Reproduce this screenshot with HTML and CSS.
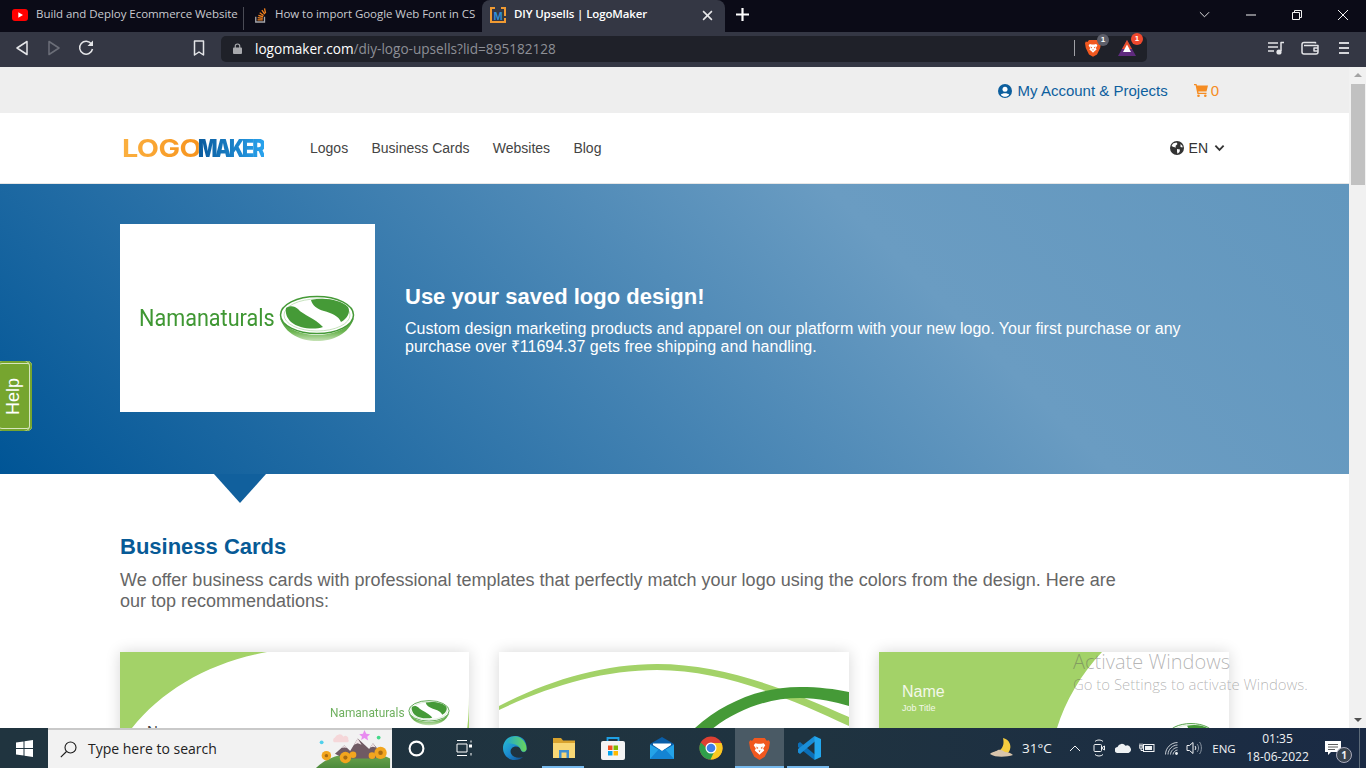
FILE: index.html
```html
<!DOCTYPE html>
<html lang="en">
<head>
<meta charset="utf-8">
<title>DIY Upsells | LogoMaker</title>
<link rel="stylesheet" href="styles.css">
</head>
<body>
<svg class="defs" width="0" height="0">
  <defs>
    <linearGradient id="bowlGrad" x1="0" y1="0" x2="0" y2="1"><stop offset="0" stop-color="#459a37"/><stop offset=".6" stop-color="#6db552"/><stop offset="1" stop-color="#c5e2b5"/></linearGradient>
    <linearGradient id="edgeGrad" x1="0" y1="0" x2="1" y2="1"><stop offset="0" stop-color="#2bc3d2"/><stop offset=".5" stop-color="#1b8ad0"/><stop offset="1" stop-color="#11407f"/></linearGradient>
    <linearGradient id="edgeTop" x1="0" y1="0" x2="1" y2="0"><stop offset="0" stop-color="#1fa8cf"/><stop offset="1" stop-color="#6ad65a"/></linearGradient>
    <linearGradient id="hillGrad" x1="0" y1="0" x2="0" y2="1"><stop offset="0" stop-color="#6fa84f"/><stop offset="1" stop-color="#4d8a3c"/></linearGradient>
    <symbol id="bowl" viewBox="0 0 76 48">
      <path class="bowl-base" d="M1 24C6 40 22 47 38 47S70 40 75 24C68 36 52 41 38 41S8 36 1 24Z"/>
      <ellipse class="bowl-ring" cx="38" cy="21" rx="36.5" ry="18.5"/>
      <ellipse class="bowl-white" cx="38" cy="21" rx="33" ry="16"/>
      <path class="bowl-leaf" d="M32 6C46 3 62 6 69 13C72 18 68 25 62 28C60 22 52 19 45 17C38 15 33 11 32 6Z"/>
      <path class="bowl-leaf" d="M7 14C11 11 16 12 19 15C24 21 36 24 44 33C36 36 20 35 12 28C8 24 6 19 7 14Z"/>
    </symbol>
    <symbol id="brave" viewBox="0 0 20 22">
      <path class="brave-orange" d="M5 1H15L17 3.500L19 3L20 5L19 11L15 19L10 22L5 19L1 11L0 5L1 3L3 3.500Z"/>
      <path class="brave-white" d="M6 6L8.500 6.500H11.500L14 6L15.500 8L13.500 11L14.500 13L11.500 15.500L10 17L8.500 15.500L5.500 13L6.500 11L4.500 8Z"/>
      <path class="brave-orange" d="M7 9L9 10.500L7.500 11.500ZM13 9L11 10.500L12.500 11.500ZM9 13H11L10 14.500Z"/>
    </symbol>
  </defs>
</svg>

<div class="tabs">
  <div class="tab tab-one">
    <svg class="fav" viewBox="0 0 16 12"><rect class="yt-red" width="16" height="12" rx="3"/><path class="fill-white" d="M6.300 3.300L11 6L6.300 8.700Z"/></svg>
    <span class="tab-title">Build and Deploy Ecommerce Website</span>
  </div>
  <div class="tab tab-two">
    <svg class="fav" viewBox="0 0 16 18"><path class="so-tray" d="M2 11V17H12V11"/><path class="so-bar" d="M4 14.500H10M4.200 12L10 12.800M5 9.300L10.400 11M6.500 6.500L11 9.500M9 3.500L12.300 8M12 1.500L13.200 7"/></svg>
    <span class="tab-title">How to import Google Web Font in CS</span>
  </div>
  <div class="tab tab-active">
    <svg class="fav" viewBox="0 0 16 16"><path class="lm-bracket" d="M5 1H1V15H15V11"/><path class="lm-bracket-2" d="M11 1H15V9"/><text class="lm-letter" x="8" y="12.500" text-anchor="middle">M</text></svg>
    <span class="tab-title tab-title-active">DIY Upsells | LogoMaker</span>
    <svg class="tab-close" viewBox="0 0 10 10"><path class="stroke-white" d="M1 1L9 9M9 1L1 9"/></svg>
  </div>
  <svg class="new-tab" viewBox="0 0 12 12"><path class="stroke-plus" d="M6 0V12M0 6H12"/></svg>
  <div class="win-controls">
    <svg class="win-chev" viewBox="0 0 12 7"><path class="stroke-thin" d="M1 1L6 6L11 1"/></svg>
    <svg class="win-icon" viewBox="0 0 10 10"><path class="stroke-thin" d="M0 5H10"/></svg>
    <svg class="win-icon" viewBox="0 0 10 10"><path class="stroke-thin" d="M2.500 2V.5H9.500V7.500H8M.5 2.500H7.500V9.500H.5Z"/></svg>
    <svg class="win-icon" viewBox="0 0 10 10"><path class="stroke-thin" d="M0 0L10 10M10 0L0 10"/></svg>
  </div>
</div>

<div class="toolbar">
  <svg class="tool tool-first" viewBox="0 0 32 18"><path class="tool-line" d="M21 2.500L11 9L21 15.500Z"/></svg>
  <svg class="tool" viewBox="0 0 32 18"><path class="tool-line tool-dim" d="M11 2.500L21 9L11 15.500Z"/></svg>
  <svg class="tool" viewBox="0 0 32 18"><path class="tool-line" d="M21.500 5A6.500 6.500 0 1 0 22.500 10"/><path class="fill-light" d="M23 1.500V7H17.500Z"/></svg>
  <svg class="tool tool-mark" viewBox="0 0 32 18"><path class="tool-line" d="M11.500 2H20.500V16L16 13L11.500 16Z"/></svg>
  <div class="omnibox">
    <svg class="lock" viewBox="0 0 10 12"><path class="lock-shackle" d="M2.500 6V3.500a2.500 2.500 0 0 1 5 0V6"/><rect class="lock-body" y="5" width="10" height="7" rx="1"/></svg>
    <div class="url"><span class="url-host">logomaker.com</span>/diy-logo-upsells?lid=895182128</div>
    <span class="omni-divider"></span>
    <div class="shield-wrap">
      <svg class="shield"><use href="#brave"/></svg>
      <span class="badge badge-grey">1</span>
    </div>
    <div class="bat-wrap">
      <svg class="bat" viewBox="0 0 18 16"><path class="bat-purple" d="M9 0L18 16H0Z"/><path class="bat-orange" d="M9 0L14 9H4Z"/><path class="fill-white" d="M9 4.500L13 12H5Z"/></svg>
      <span class="badge badge-red">1</span>
    </div>
  </div>
  <svg class="tool-right tool-right-first" viewBox="0 0 18 14"><path class="tool-line" d="M1 2H11M1 6H11M1 10H7"/><path class="tool-line" d="M14 10V1.500H17"/><circle class="fill-light" cx="12" cy="11" r="2.600"/></svg>
  <svg class="tool-right" viewBox="0 0 18 14"><path class="tool-line" d="M14.500 2.500V1.500H3C2 1.500 1 2.300 1 3.500V11C1 12.200 2 13 3 13H15C16 13 17 12.200 17 11V4.500H3"/><path class="tool-line" d="M17 7H13V10H17"/></svg>
  <svg class="tool-right" viewBox="0 0 18 14"><path class="tool-thick" d="M4 2H14M4 7H14M4 12H14"/></svg>
</div>

<div class="viewport">
  <main class="page">
    <div class="account-bar">
      <a class="account-link">
        <svg class="account-icon" viewBox="0 0 14 14"><circle class="fill-blue" cx="7" cy="7" r="7"/><circle class="fill-white" cx="7" cy="5.300" r="2.500"/><path class="fill-white" d="M2.800 10.800C4 8.800 10 8.800 11.200 10.800C10 12.200 8.500 12.800 7 12.800S4 12.200 2.800 10.800Z"/></svg>
        My Account &amp; Projects
      </a>
      <a class="cart-link">
        <svg class="cart-icon" viewBox="0 0 14 13"><path class="cart-fill" d="M0 0H2.500L3 1.500H14L12.500 7.500H4.300L4.600 8.700H12.500V10H3.400L1.600 1.300H0Z"/><circle class="cart-fill" cx="4.500" cy="11.700" r="1.300"/><circle class="cart-fill" cx="11.300" cy="11.700" r="1.300"/></svg>
        0
      </a>
    </div>
    <nav class="site-nav">
      <div class="brand"><span class="brand-logo">LOGO</span><span class="brand-maker">MAKER</span></div>
      <ul class="nav-links">
        <li>Logos</li>
        <li>Business Cards</li>
        <li>Websites</li>
        <li>Blog</li>
      </ul>
      <div class="lang">
        <svg class="globe" viewBox="0 0 14 14"><circle class="fill-dark" cx="7" cy="7" r="7"/><path class="fill-white" d="M3 2.500L6.500 1.500L7.500 3L5.500 5L6 6.500L3.500 6L1.500 5ZM7 8L10 8.500L9.500 11L7.500 12.800L7 10.500ZM10.500 3L12.500 5V6.500L10.500 6Z"/></svg>
        <span>EN</span>
        <svg class="lang-chev" viewBox="0 0 12 8"><path class="stroke-dark" d="M1.500 1.500L6 6L10.500 1.500"/></svg>
      </div>
    </nav>
    <section class="hero">
      <div class="hero-logo">
        <span class="nama-text">Namanaturals</span>
        <svg class="nama-bowl"><use href="#bowl"/></svg>
      </div>
      <div class="hero-copy">
        <h1>Use your saved logo design!</h1>
        <p>Custom design marketing products and apparel on our platform with your new logo. Your first purchase or any purchase over ₹11694.37 gets free shipping and handling.</p>
      </div>
      <span class="hero-pointer"></span>
    </section>
    <section class="cards-section">
      <h2>Business Cards</h2>
      <p class="lede">We offer business cards with professional templates that perfectly match your logo using the colors from the design. Here are our top recommendations:</p>
      <div class="card-grid">
        <div class="card">
          <svg class="card-art" viewBox="0 0 349 200">
            <path class="card-green" d="M0 0H147C90 10 42 38 12 76C6 85 0 100 0 112Z"/>
            <path class="card-green" d="M349 44V90L345 90C348 75 349 60 349 44Z"/>
            <text class="card-name-dark" x="27" y="84">Name</text>
          </svg>
          <div class="card-logo">
            <span class="card-logo-text">Namanaturals</span>
            <svg class="card-logo-bowl"><use href="#bowl"/></svg>
          </div>
        </div>
        <div class="card">
          <svg class="card-art" viewBox="0 0 350 200">
            <path class="card-green" d="M0 54C50 28 105 12 158 12C225 12 290 38 350 65V74C290 46 225 18 158 18C105 18 50 34 0 58Z"/>
            <path class="card-dark" d="M196 76C225 50 262 35 301 35C320 35 336 37 350 40V54C336 50 320 46 301 46C268 46 235 58 207 82Z"/>
          </svg>
        </div>
        <div class="card">
          <svg class="card-art" viewBox="0 0 350 200">
            <path class="card-green" d="M0 0H223C202 22 186 50 178 76C174 90 172 110 172 200H0Z"/>
            <text class="card-name" x="23" y="45">Name</text>
            <text class="card-job" x="23" y="59">Job Title</text>
          </svg>
          <svg class="card-bowl-large"><use href="#bowl"/></svg>
        </div>
      </div>
    </section>
  </main>
  <div class="scrollbar">
    <span class="arrow-up"></span>
    <span class="thumb"></span>
    <span class="arrow-down"></span>
  </div>
  <button class="help-tab"><span>Help</span></button>
  <div class="activate">
    <div class="activate-title">Activate Windows</div>
    <div class="activate-sub">Go to Settings to activate Windows.</div>
  </div>
</div>

<footer class="taskbar">
  <div class="start">
    <svg class="win-logo" viewBox="0 0 17 17"><path class="fill-white" d="M0 2.500L7.500 1.400V8H0ZM8.500 1.300L17 0V8H8.500ZM0 9H7.500V15.600L0 14.500ZM8.500 9H17V17L8.500 15.700Z"/></svg>
  </div>
  <div class="searchbox">
    <svg class="search-icon" viewBox="0 0 17 17"><circle class="stroke-black" cx="10.500" cy="6.500" r="5.500"/><path class="stroke-black" d="M6.500 10.500L.8 16.200"/></svg>
    <span class="search-text">Type here to search</span>
    <svg class="search-art" viewBox="0 0 78 40">
      <path class="art-hill" d="M0 40C12 28 30 24 46 24C58 24 70 26 78 30V40Z"/>
      <path class="art-m1" d="M20 25L30 16L36 22L44 9L56 20L60 14L70 26L62 30H30Z"/>
      <path class="art-snow" d="M44 9L40 15.500L44 14L48 15.500ZM60 14L57 18.500L60 17.500L63 18.500ZM30 16L27 19L30 18.500L33 19Z"/>
      <path class="art-cloud" d="M19 13A3 3 0 0 1 20 8A5 5 0 0 1 29 7A3 3 0 0 1 34 10A2 2 0 0 1 33 13Z"/>
      <path class="art-star" d="M51 0L53 4L57 4.500L54 7L55 11L51 8.500L47.500 10.500L48.500 7L45.500 4.500L49.500 4Z"/>
      <circle class="art-mint" cx="66" cy="8" r="2"/>
      <circle class="art-sky" cx="6" cy="13" r="2"/>
      <circle class="art-flower" cx="11" cy="27" r="5"/><circle class="art-center" cx="11" cy="27" r="1.800"/>
      <circle class="art-flower" cx="31" cy="29" r="6"/><circle class="art-center" cx="31" cy="29" r="2.200"/>
      <circle class="art-flower" cx="39" cy="26" r="3.500"/>
      <circle class="art-flower" cx="59" cy="27" r="3.500"/>
      <circle class="art-flower" cx="68" cy="24" r="6.500"/><circle class="art-center" cx="68" cy="24" r="2.400"/>
    </svg>
  </div>
  <div class="slot"><svg class="cortana" viewBox="0 0 16 16"><circle class="stroke-cortana" cx="8" cy="8" r="6.500"/></svg></div>
  <div class="slot slot-task"><svg class="taskview" viewBox="0 0 16 16"><path class="stroke-task" d="M1 .5H11M1 15.500H11M1 4H11V12H1ZM15 .5V2.500M15 13V15.500"/><rect class="fill-white" x="13" y="4.500" width="3" height="3"/></svg></div>
  <div class="slot"><svg class="app-icon" viewBox="0 0 24 24"><path class="edge-main" d="M12 0C5 0 0 5.500 0 12C0 19 5.500 24 11.500 24C15.500 24 18 22.800 20 21C16.500 22.500 10 22 8 17.500C6.500 14 9 10.500 13 10.500C15.500 10.500 17.500 12 18 14C19 17 22 16.500 23.300 14.500C24.500 11 23.500 0 12 0Z"/><path class="edge-top" d="M3 6C6 .5 13 -1 18 2.500C22 5 24 10 23.500 13.500C22.500 16.500 19 16.500 18 14C17 10.500 14 8.500 10.500 8C7.500 7.500 5 7 3 6Z"/></svg></div>
  <div class="slot slot-open"><svg class="app-icon" viewBox="0 0 24 22"><path class="folder-back" d="M1 1H9L11 3.500H23V21H1Z"/><path class="folder-front" d="M1 6H23V21H1Z"/><path class="folder-blue" d="M7 13H17V21H14.500V15.500H9.500V21H7Z"/></svg></div>
  <div class="slot"><svg class="app-icon" viewBox="0 0 24 24"><path class="store-handle" d="M6.500 7V2H17.500V7"/><rect class="store-bag" x="0" y="5" width="24" height="19" rx="2"/><rect class="store-r" x="7" y="9.500" width="4.500" height="4.500"/><rect class="store-g" x="12.500" y="9.500" width="4.500" height="4.500"/><rect class="store-b" x="7" y="15" width="4.500" height="4.500"/><rect class="store-y" x="12.500" y="15" width="4.500" height="4.500"/></svg></div>
  <div class="slot"><svg class="app-icon" viewBox="0 0 24 22"><path class="mail-dark" d="M0 7L12 0L24 7V22H0Z"/><path class="fill-white" d="M3 6.500H21V8L12 14L3 8Z"/><path class="mail-light" d="M0 7.500L12 14.500L24 7.500V22H0Z"/><path class="mail-mid" d="M0 22L9 12L12 14.500L15 12L24 22Z"/></svg></div>
  <div class="slot"><svg class="app-icon" viewBox="0 0 24 24"><circle class="chrome-red" cx="12" cy="12" r="11.500"/><path class="chrome-green" d="M1.800 6.500A11.500 11.500 0 0 0 13.500 23.400L17 12H7.500Z"/><path class="chrome-yellow" d="M12 7H22.500A11.500 11.500 0 0 1 11.500 23.500L16.500 13Z"/><circle class="fill-white" cx="12" cy="12" r="5.500"/><circle class="chrome-blue" cx="12" cy="12" r="4.300"/></svg></div>
  <div class="slot slot-active"><svg class="app-brave"><use href="#brave"/></svg></div>
  <div class="slot slot-code"><svg class="app-icon" viewBox="0 0 24 24"><path class="code-left" d="M1 7.500L3 6L19 19.500L17.500 24L1 11Z"/><path class="code-mid" d="M1 16.500L3 18L19 4.500L17.500 0L1 13Z"/><path class="code-right" d="M17.500 0L24 3V21L17.500 24Z"/></svg></div>
  <div class="tray">
    <div class="tray-weather"><svg class="moon" viewBox="0 0 23 20"><path class="moon-fill" d="M13 0A9 9 0 1 1 4 14C11 14 15 8 13 0Z"/><path class="moon-cloud" d="M0 16C3 13 6 14 8 12C11 11 13 13 15 14C18 14 21 15 23 17C17 19 6 20 0 16Z"/></svg></div>
    <div class="tray-temp">31°C</div>
    <div class="tray-item tray-chevron"><svg class="tray-svg-chev" viewBox="0 0 12 7"><path class="stroke-tray" d="M1 6L6 1L11 6"/></svg></div>
    <div class="tray-item"><svg class="tray-svg" viewBox="0 0 12 18"><path class="stroke-tray" d="M2 2.500C4 .5 8 .5 10 2.500M2 15.500C4 17.500 8 17.500 10 15.500"/><rect class="stroke-tray" x="1" y="5.500" width="7.500" height="7" rx="1"/><path class="stroke-tray" d="M8.500 9L11.500 7V11L8.500 9Z"/></svg></div>
    <div class="tray-item"><svg class="tray-svg-wide" viewBox="0 0 16 10"><path class="fill-cloud" d="M3 10A3 3 0 0 1 2.500 4A4.500 4.500 0 0 1 10.500 2.800A3.500 3.500 0 0 1 13.500 10Z"/></svg></div>
    <div class="tray-item"><svg class="tray-svg-wide" viewBox="0 0 16 10"><path class="stroke-tray" d="M3 .5V3M1 .5V3M0 3H4V5H0ZM2 5V7.500H4"/><rect class="stroke-tray" x="4.500" y="1.500" width="10.500" height="7"/><rect class="fill-cloud" x="6" y="3" width="7" height="4"/></svg></div>
    <div class="tray-item"><svg class="tray-svg-wifi" viewBox="0 0 13 13"><path class="stroke-wifi" d="M.5 12.500C.5 6 6 .5 12.500 .5M3 12.500C3 7.500 7.500 3 12.500 3M5.500 12.500C5.500 9 9 5.500 12.500 5.500M8 12.500C8 10.500 10.500 8 12.500 8"/><circle class="fill-cloud" cx="11.500" cy="11.500" r="1.400"/></svg></div>
    <div class="tray-item tray-vol"><svg class="tray-svg-vol" viewBox="0 0 16 14"><path class="stroke-tray" d="M1 4.500H3.500L7 1.500V12.500L3.500 9.500H1Z"/><path class="stroke-tray" d="M9 5C10 6 10 8 9 9"/><path class="stroke-dim" d="M11 3C13 5 13 9 11 11M13.500 1C16 4 16 10 13.500 13"/></svg></div>
    <div class="tray-lang">ENG</div>
    <div class="tray-clock"><span>01:35</span><span>18-06-2022</span></div>
    <div class="tray-notify">
      <svg class="notify-svg" viewBox="0 0 16 14"><path class="fill-white" d="M0 0H16V11H6L3 14V11H0Z"/><path class="notify-lines" d="M3 3.500H13M3 6H13M3 8.500H10"/></svg>
      <span class="notify-badge">1</span>
    </div>
    <span class="tray-sliver"></span>
  </div>
</footer>
</body>
</html>
```

FILE: styles.css
```css
* { box-sizing: border-box; }
html, body { margin: 0; padding: 0; }
body {
  width: 1366px;
  height: 768px;
  overflow: hidden;
  display: flex;
  flex-direction: column;
  background: #fff;
  font-family: "Liberation Sans", Arial, sans-serif;
}
.defs { position: absolute; }

/* shared svg paint */
.fill-white { fill: #fff; }
.fill-light { fill: #e4e5e8; }
.fill-blue { fill: #0d5f9e; }
.fill-dark { fill: #333; }
.fill-cloud { fill: #eef1f3; }
.stroke-white { stroke: #e8e8ea; stroke-width: 1.400; fill: none; }
.stroke-thin { stroke: #f2f2f2; stroke-width: 1; fill: none; }
.stroke-plus { stroke: #fff; stroke-width: 2; fill: none; }
.stroke-dark { stroke: #333; stroke-width: 2; fill: none; }
.stroke-black { stroke: #1a1a1a; stroke-width: 1.100; fill: none; }
.stroke-cortana { stroke: #fff; stroke-width: 2; fill: none; }
.stroke-task { stroke: #fff; stroke-width: 1; fill: none; }
.stroke-tray { stroke: #f0f2f4; stroke-width: 1; fill: none; }
.stroke-dim { stroke: #8b96a3; stroke-width: 1; fill: none; }
.stroke-wifi { stroke: #c5cbd2; stroke-width: 1; fill: none; }

/* tab strip */
.tabs {
  flex: 0 0 32px;
  min-height: 0;
  height: 32px;
  display: flex;
  align-items: stretch;
  background: #0b0b17;
  font-family: "Open Sans", "Noto Sans", sans-serif;
  font-size: 11.500px;
  line-height: 14px;
  color: #c9cad0;
}
.tab { display: flex; align-items: center; white-space: nowrap; }
.tab-one { width: 244px; padding: 0 2px 9px 12px; border-right: 1px solid #4a4b55; margin: 7px 0 2px; }
.tab-two { width: 238px; padding: 0 2px 9px 10px; margin: 7px 0 2px; }
.tab-active { width: 243px; padding: 0 12px 4px 8px; background: #343744; border-radius: 8px 8px 0 0; }
.fav { width: 16px; height: 16px; flex: none; margin: 2px 8px 0 0; }
.tab-two .fav { margin-right: 7px; width: 14px; }
.tab-title { flex: 1; letter-spacing: -.05px; }
.tab-title-active { color: #fff; font-weight: 600; letter-spacing: -.13px; }
.tab-close { width: 11px; height: 11px; flex: none; margin-top: 2px; }
.new-tab { width: 13px; height: 13px; align-self: center; margin: 0 0 3px 11px; flex: none; }
.yt-red { fill: #f00; }
.so-tray { stroke: #a6a7ab; stroke-width: 1.500; fill: none; }
.so-bar { stroke: #f2811d; stroke-width: 1.500; fill: none; }
.lm-bracket { stroke: #f09a32; stroke-width: 2; fill: none; }
.lm-bracket-2 { stroke: #f09a32; stroke-width: 2; fill: none; }
.lm-letter { fill: #2f8fd8; font: 700 11px "Liberation Sans", sans-serif; }
.win-controls { margin-left: auto; padding-bottom: 3px; display: flex; align-items: center; }
.win-chev { width: 11px; height: 7px; margin-right: 36px; }
.win-icon { width: 10px; height: 10px; margin-right: 36px; }
.win-icon:last-child { margin-right: 18px; }

/* toolbar */
.toolbar {
  flex: 0 0 35px;
  display: flex;
  align-items: center;
  padding: 0 0 3px 6px;
  background: #343744;
}
.tool { width: 32px; height: 18px; flex: none; }
.tool-mark { margin-left: 81px; }
.tool-line { stroke: #e4e5e8; stroke-width: 1.500; fill: none; stroke-linejoin: round; }
.tool-dim { stroke: #6b6e78; }
.tool-thick { stroke: #d5d6da; stroke-width: 2; fill: none; }
.omnibox {
  flex: none;
  width: 926px;
  height: 26px;
  margin: 2px 0 0 6px;
  display: flex;
  align-items: center;
  padding-left: 12px;
  border-radius: 5px;
  background: #1f2129;
  font-family: "Open Sans", "Noto Sans", sans-serif;
}
.lock { width: 9px; height: 11px; flex: none; margin-bottom: 2px; }
.lock-shackle { stroke: #a8a9ad; stroke-width: 1.300; fill: none; }
.lock-body { fill: #a8a9ad; }
.url { margin-left: 13px; padding-bottom: 2px; font-size: 13.600px; color: #8d8f96; flex: 1; white-space: nowrap; }
.url-host { color: #fff; }
.omni-divider { width: 1px; height: 16px; background: #a0a1a6; flex: none; margin-bottom: 2px; }
.shield-wrap, .bat-wrap { position: relative; flex: none; margin-bottom: 2px; }
.shield-wrap { width: 16px; height: 18px; margin-left: 10px; }
.shield { display: block; width: 16px; height: 18px; }
.bat-wrap { width: 18px; height: 16px; margin-left: 17px; margin-right: 11px; }
.bat { display: block; width: 18px; height: 16px; }
.bat-purple { fill: #5f2a7e; }
.bat-orange { fill: #e9512b; }
.badge {
  position: absolute;
  top: -5px;
  left: 12px;
  width: 12px;
  height: 12px;
  border-radius: 50%;
  font: 700 8px/12px "Liberation Sans", sans-serif;
  text-align: center;
  color: #fff;
}
.badge-grey { background: #5d5f6a; }
.badge-red { background: #f0492e; left: 13px; top: -7px; }
.tool-right { width: 18px; height: 14px; flex: none; margin-right: 16px; }
.tool-right-first { margin-left: 120px; }
.brave-orange { fill: #f1581f; }
.brave-white { fill: #fff; }

/* viewport */
.viewport { flex: 1; min-height: 0; display: flex; position: relative; overflow: hidden; }
.page { width: 1349px; flex: none; background: #fff; overflow: hidden; }
.scrollbar {
  width: 17px;
  flex: none;
  background: #f1f1f1;
  display: flex;
  flex-direction: column;
  align-items: center;
}
.arrow-up { margin-top: 6px; width: 0; height: 0; border: 4px solid transparent; border-top: 0; border-bottom: 4px solid #a3a3a3; }
.thumb { width: 14px; height: 101px; margin-top: 7px; background: #c1c1c1; }
.arrow-down { margin-top: auto; margin-bottom: 6px; width: 0; height: 0; border: 4px solid transparent; border-bottom: 0; border-top: 4px solid #505050; }

.account-bar {
  height: 46px;
  display: flex;
  align-items: center;
  justify-content: flex-end;
  padding: 1px 130px 0 0;
  background: #eee;
  font-size: 15px;
}
.account-link { display: flex; align-items: center; gap: 6px; color: #0d5f9e; }
.account-icon { width: 14px; height: 14px; }
.cart-link { display: flex; align-items: center; gap: 3px; margin-left: 26px; color: #f58c22; }
.cart-icon { width: 14px; height: 13px; }
.cart-fill { fill: #f58c22; }

.site-nav {
  height: 71px;
  display: flex;
  align-items: center;
  padding: 0 124px 0 122px;
  border-bottom: 1px solid #e6e6e6;
  background: #fff;
}
.brand {
  width: 142px;
  flex: none;
  display: flex;
  padding-top: 1px;
  font: 800 24px/1 Inter, sans-serif;
  white-space: nowrap;
}
.brand-logo {
  display: block;
  width: 64px;
  font-weight: 700;
  letter-spacing: -.5px;
  background: linear-gradient(90deg, #fbb040, #f7941d);
  -webkit-background-clip: text;
  background-clip: text;
  color: transparent;
  transform: scaleX(1.2);
  transform-origin: left center;
  margin-right: 12px;
}
.brand-maker {
  display: block;
  width: 78px;
  font-weight: 900;
  letter-spacing: -2.800px;
  background: linear-gradient(90deg, #0a5a9c, #29a3ee);
  -webkit-background-clip: text;
  background-clip: text;
  color: transparent;
  transform: scaleX(.85);
  transform-origin: left center;
  margin-right: -12px;
}
.nav-links {
  list-style: none;
  margin: 0 0 0 46px;
  padding: 0;
  display: flex;
  gap: 23.300px;
  font-size: 14px;
  color: #444;
}
.lang { margin-left: auto; display: flex; align-items: center; font-size: 14px; color: #333; }
.globe { width: 14px; height: 14px; margin-right: 5px; }
.lang-chev { width: 11px; height: 8px; margin-left: 6px; }

.hero {
  position: relative;
  height: 290px;
  display: flex;
  align-items: flex-start;
  gap: 30px;
  padding: 40px 0 0 120px;
  background: linear-gradient(45deg, #005596 0%, #6a9cc2 68%, #6297be 100%);
}
.hero-logo {
  width: 255px;
  height: 188px;
  flex: none;
  display: flex;
  align-items: center;
  justify-content: center;
  background: #fff;
}
.nama-text {
  width: 134px;
  margin: 2px 0 0 -1px;
  font: 400 23.500px/1 Roboto, sans-serif;
  color: #3f9733;
  transform: scaleX(.92);
  transform-origin: left center;
  white-space: nowrap;
}
.nama-bowl { width: 76px; height: 48px; margin-left: 6px; flex: none; }
.bowl-base { fill: url(#bowlGrad); }
.bowl-ring { fill: #fff; stroke: #459a37; stroke-width: 1.500; }
.bowl-white { fill: #fff; stroke: #8cc47c; stroke-width: .5; }
.bowl-leaf { fill: #459a37; }
.hero-copy { width: 800px; height: 188px; padding-top: 4px; display: flex; flex-direction: column; justify-content: center; color: #fff; }
.hero-copy h1 { margin: 0 0 11px; font-size: 22px; line-height: 25px; font-weight: 700; }
.hero-copy p { margin: 0; font-size: 16px; line-height: 18px; }
.hero-pointer {
  position: absolute;
  left: 214px;
  top: 290px;
  width: 0;
  height: 0;
  border-left: 26px solid transparent;
  border-right: 26px solid transparent;
  border-top: 29px solid #11609d;
}

.cards-section { padding: 60px 120px 0; }
.cards-section h2 { margin: 0 0 11px; font-size: 22px; line-height: 25px; color: #075a96; font-weight: 700; }
.lede { margin: 0; width: 1010px; font-size: 18px; line-height: 21px; color: #666; }
.card-grid { margin-top: 40px; display: grid; grid-template-columns: 349px 350px 350px; gap: 30px; }
.card { position: relative; height: 200px; background: #fff; box-shadow: 0 0 14px rgba(0,0,0,.16); }
.card-art { display: block; width: 100%; height: 100%; }
.card-green { fill: #a3d268; }
.card-dark { fill: #459a37; }
.card-name-dark { font: 15px "Liberation Sans", sans-serif; fill: #444; }
.card-name { font: 16px "Liberation Sans", sans-serif; fill: #f3f8ea; }
.card-job { font: 9px "Liberation Sans", sans-serif; fill: #f3f8ea; }
.card-logo { position: absolute; left: 210px; top: 47px; display: flex; align-items: center; }
.card-logo-text { font: 400 13.500px/1 Roboto, sans-serif; color: #6fb05f; transform: scaleX(.88); transform-origin: left center; width: 78px; white-space: nowrap; }
.card-logo-bowl { width: 42px; height: 27px; }
.card-bowl-large { position: absolute; left: 288px; top: 70px; width: 48px; height: 30px; }

/* overlays */
.help-tab {
  position: absolute;
  left: -3px;
  top: 294px;
  width: 35px;
  height: 70px;
  padding: 0 2px 0 0;
  border: 0;
  border-radius: 5px;
  background: #76a52f;
  box-shadow: inset -2px 0 0 #76a52f, inset -3px 0 0 #d7e6bd, inset 0 2px 0 #76a52f, inset 0 3px 0 #d7e6bd, inset 0 -2px 0 #76a52f, inset 0 -3px 0 #d7e6bd;
  font: 400 18px "Liberation Sans", sans-serif;
  color: #fff;
  display: flex;
  align-items: center;
  justify-content: center;
}
.help-tab span { display: block; transform: rotate(-90deg); }
.activate {
  position: absolute;
  left: 1073px;
  top: 583px;
  font-family: "Open Sans", "Noto Sans", sans-serif;
  font-weight: 300;
  color: rgba(90,90,90,.45);
  white-space: nowrap;
  pointer-events: none;
}
.activate-title { font-size: 20px; line-height: 24px; }
.activate-sub { font-size: 14.900px; line-height: 21px; }

/* taskbar */
.taskbar {
  flex: 0 0 40px;
  position: relative;
  display: flex;
  align-items: stretch;
  background: linear-gradient(90deg, #20343f, #1f3340 60%, #1a2a44);
  color: #fff;
}
.start { width: 48px; display: flex; align-items: center; justify-content: center; }
.win-logo { width: 17px; height: 17px; }
.searchbox {
  width: 344px;
  display: flex;
  align-items: center;
  position: relative;
  padding-left: 12px;
  background: #f2f2f2;
  border-top: 2px solid #c9c9c9;
  overflow: hidden;
}
.search-icon { width: 17px; height: 17px; flex: none; }
.search-text { margin-left: 11px; padding-bottom: 2px; font: 14px "Open Sans", "Noto Sans", sans-serif; color: #222; }
.search-art { position: absolute; right: 0; bottom: 0; width: 78px; height: 38px; }
.art-hill { fill: url(#hillGrad); }
.art-m1 { fill: #6f5a63; }
.art-snow { fill: #efe3e6; }
.art-cloud { fill: #f5d7d9; }
.art-star { fill: #e88cf0; }
.art-mint { fill: #44d98a; }
.art-sky { fill: #4fd0ec; }
.art-flower { fill: #f2a51e; }
.art-center { fill: #a76a12; }

.slot { width: 49px; flex: none; display: flex; align-items: center; justify-content: center; position: relative; }
.slot-task { padding-right: 4px; }
.slot-open::after, .slot-active::after, .slot-code::after {
  content: "";
  position: absolute;
  bottom: 0;
  left: 3px;
  right: 4px;
  height: 2px;
  background: #76b9ed;
}
.slot-active { background: #4a5a65; }
.slot-active::after { left: 0; right: 0; }
.cortana { width: 17px; height: 17px; }
.taskview { width: 16px; height: 16px; }
.app-icon { width: 24px; height: 24px; }
.app-brave { width: 21px; height: 23px; }
.edge-main { fill: url(#edgeGrad); }
.edge-top { fill: url(#edgeTop); }
.folder-back { fill: #d9a32e; }
.folder-front { fill: #f8d775; }
.folder-blue { fill: #3f8fd0; }
.store-handle { stroke: #1fa0e4; stroke-width: 1.800; fill: none; }
.store-bag { fill: #f4f4f4; }
.store-r { fill: #f25022; }
.store-g { fill: #7fba00; }
.store-b { fill: #00a4ef; }
.store-y { fill: #ffb900; }
.mail-dark { fill: #0a5ea8; }
.mail-light { fill: #24a3e8; }
.mail-mid { fill: #1484d4; }
.chrome-red { fill: #dd4032; }
.chrome-green { fill: #2f9e4a; }
.chrome-yellow { fill: #f9c921; }
.chrome-blue { fill: #3f7fe8; }
.code-left { fill: #0b6fb8; }
.code-mid { fill: #1a8ed8; }
.code-right { fill: #22a7ee; }

.tray {
  position: absolute;
  left: 985px;
  top: 0;
  width: 381px;
  height: 40px;
  display: flex;
  align-items: center;
  font: 13px "Open Sans", "Noto Sans", sans-serif;
  color: #f0f2f4;
}
.tray-weather { width: 33px; display: flex; justify-content: center; }
.moon { width: 23px; height: 20px; }
.moon-fill { fill: #f5cd3f; }
.moon-cloud { fill: #d9c5ac; }
.tray-temp { width: 42px; padding-left: 4px; font-size: 13.500px; }
.tray-item { width: 24px; display: flex; justify-content: center; align-items: center; }
.tray-chevron { margin-left: 3px; }
.tray-svg-chev { width: 12px; height: 7px; }
.tray-svg { width: 12px; height: 18px; }
.tray-svg-wide { width: 16px; height: 10px; }
.tray-svg-wifi { width: 13px; height: 13px; }
.tray-svg-vol { width: 16px; height: 14px; }
.tray-vol { width: 22px; }
.tray-lang { width: 38px; text-align: center; font-size: 11.500px; }
.tray-clock { width: 69px; display: flex; flex-direction: column; align-items: center; font-size: 12px; line-height: 18px; }
.tray-notify { width: 42px; height: 40px; position: relative; display: flex; justify-content: center; align-items: center; }
.notify-svg { width: 16px; height: 14px; }
.notify-lines { stroke: #333; stroke-width: .8; fill: none; }
.notify-badge {
  position: absolute;
  left: 24px;
  top: 19px;
  width: 16px;
  height: 16px;
  border-radius: 50%;
  background: #39444f;
  border: 1px solid #aab;
  font: 700 10px/14px "Open Sans", sans-serif;
  text-align: center;
}
.tray-sliver { width: 1px; height: 40px; margin-left: 5px; background: #5c6a78; }
```
